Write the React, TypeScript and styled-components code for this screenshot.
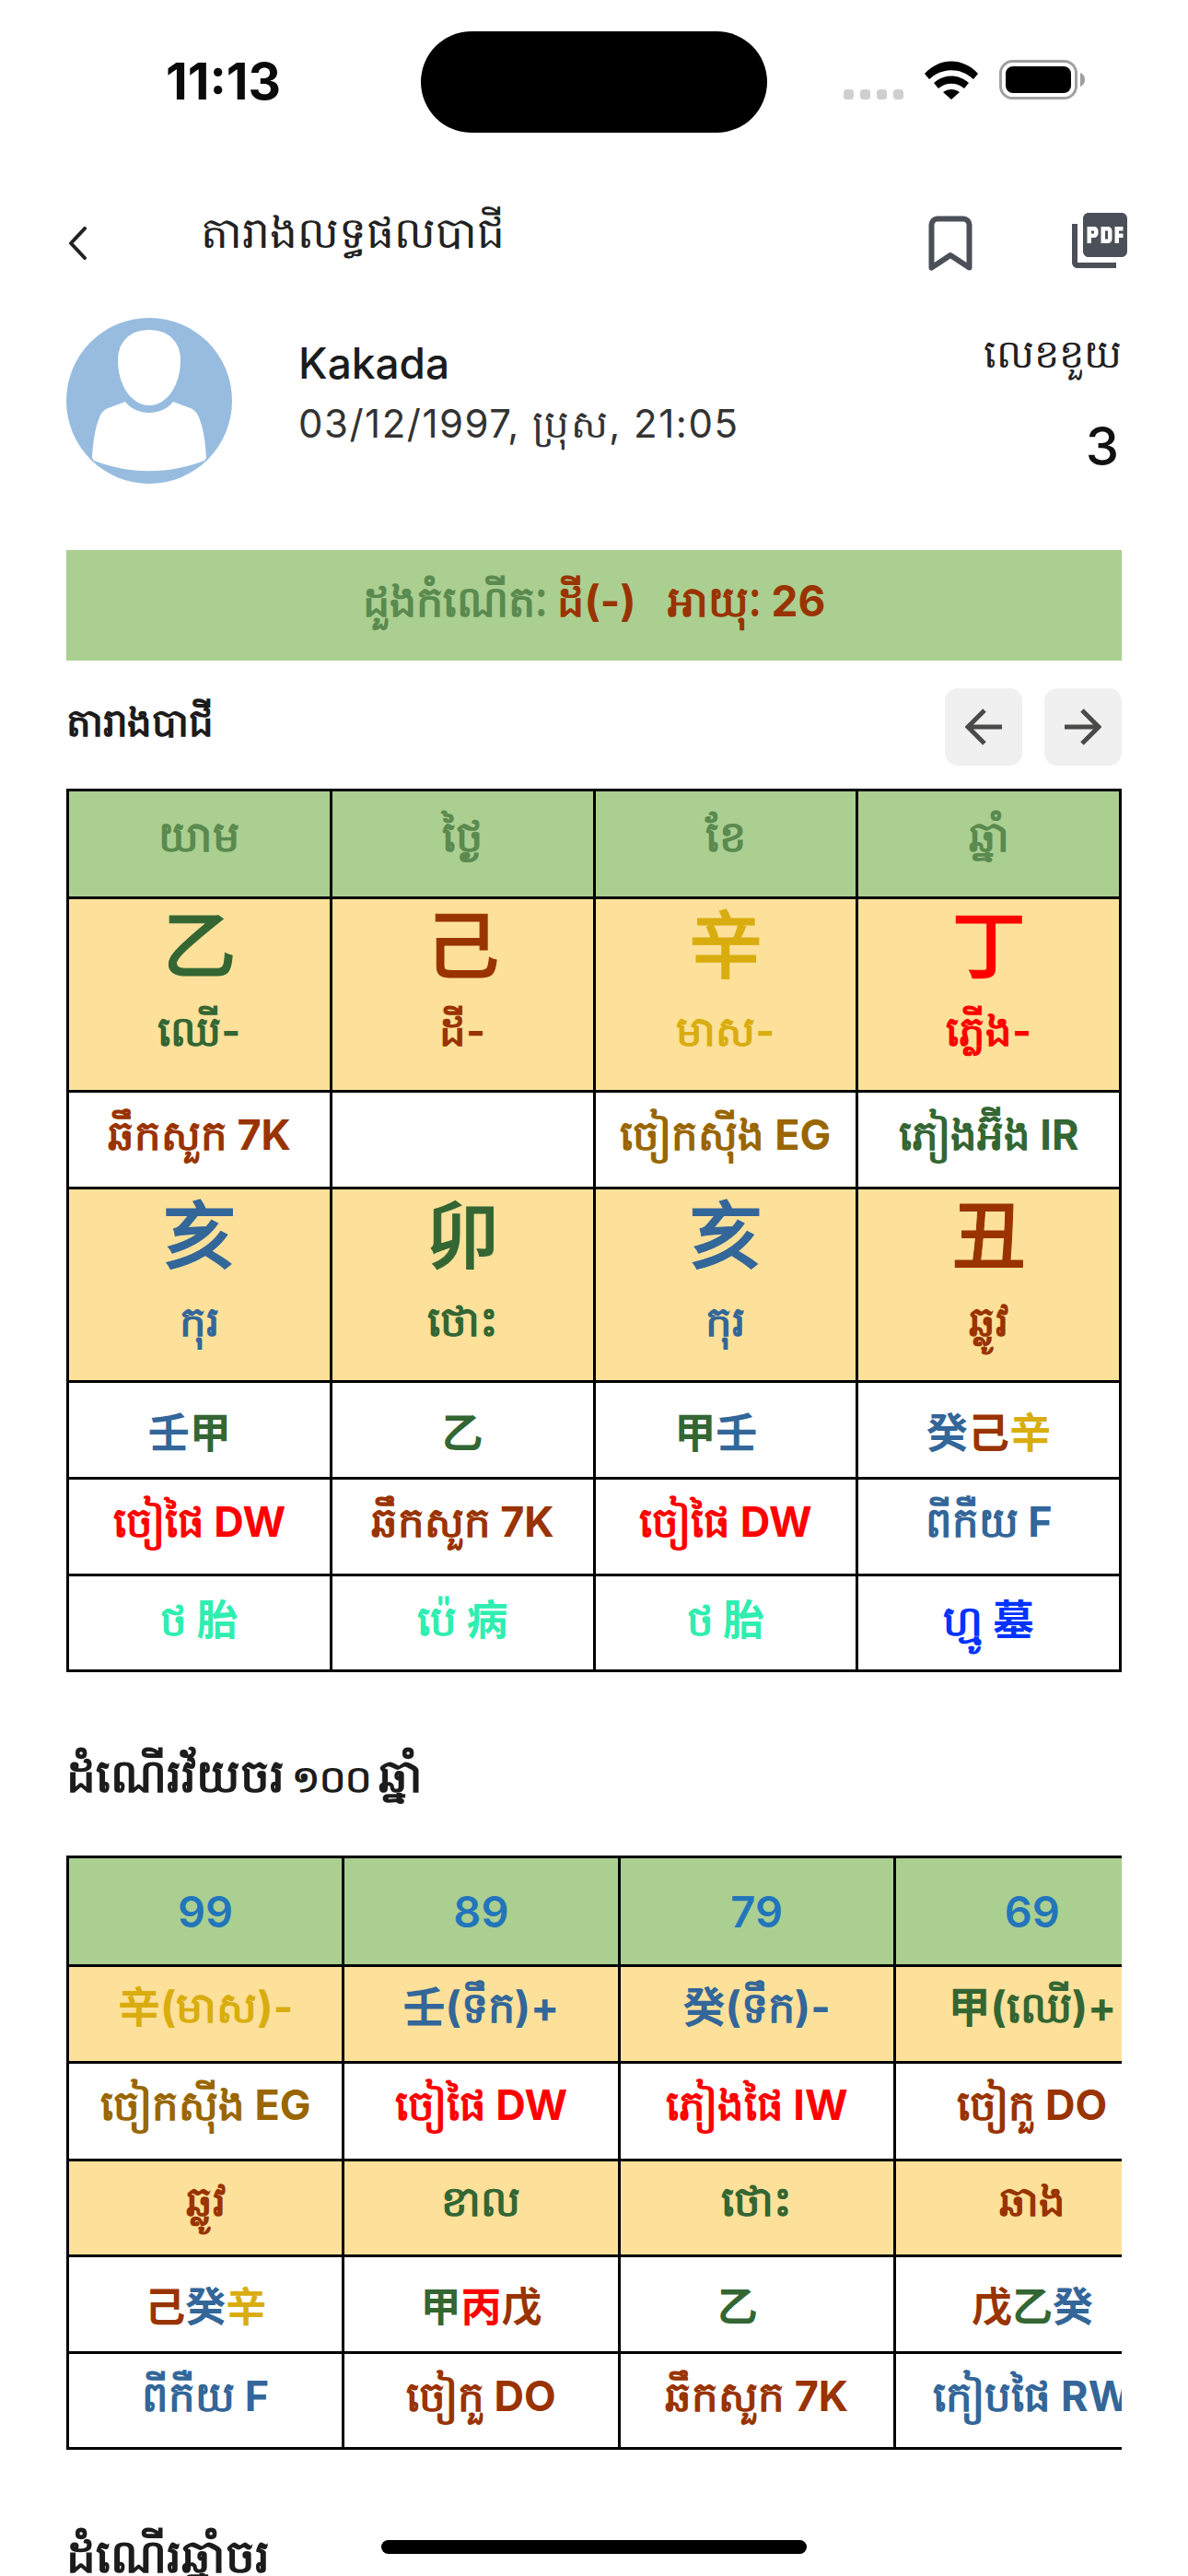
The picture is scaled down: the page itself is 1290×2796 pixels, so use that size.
import React from 'react';
import styled, {createGlobalStyle} from 'styled-components';
import {MdPictureAsPdf} from 'react-icons/md';

const WOOD = '#336633';
const EARTH = '#993300';
const METAL = '#d9ad0f';
const FIRE = '#ff0000';
const WATER = '#336699';
const MINT = '#2eeeb0';
const BLUE = '#0033ff';
const OCHRE = '#996600';
const AGE = '#2275bb';
const GREEN_BG = '#abcf91';
const YELLOW_BG = '#fde19a';

type Piece = {text: string, color: string};
type Cell = Piece[] | null;

const GlobalStyle = createGlobalStyle`
  html, body {
    margin: 0;
    padding: 0;
    background: #fff;
  }
  body {
    font-family: Inter, "Noto Sans", "Noto Sans CJK SC", sans-serif;
    color: #1c1c1c;
  }
`;

const Screen = styled.div`
  position: relative;
  width: 1290px;
  height: 2796px;
  overflow: hidden;
  background: #fff;
`;

const StatusBar = styled.div`
  display: flex;
  align-items: center;
  height: 178px;
  padding: 0 0 0 180px;
  box-sizing: border-box;
`;

const Time = styled.div`
  width: 277px;
  margin-top: -3px;
  font-size: 55px;
  font-weight: 700;
  color: #0a0a0a;
`;

const Notch = styled.div`
  width: 376px;
  height: 110px;
  border-radius: 55px;
  background: #000;
`;

const StatusIcons = styled.div`
  display: flex;
  align-items: flex-end;
  gap: 23px;
  margin: -6px 0 0 83px;
`;

const NavBar = styled.div`
  display: flex;
  align-items: center;
  height: 88px;
  margin-top: 42px;
  padding: 0 60px 0 72px;
`;

const NavTitle = styled.div`
  flex: 1;
  padding: 0 0 24px 122px;
  font-size: 47px;
  line-height: 60px;
  color: #222;
`;

const NavIcons = styled.div`
  display: flex;
  align-items: center;
  gap: 102px;
`;

const PdfButton = styled.div`
  display: flex;
  margin-bottom: 6px;
  color: #4b5058;
`;

const Profile = styled.div`
  display: flex;
  align-items: center;
  height: 180px;
  margin-top: 37px;
  padding: 0 72px;
`;

const ProfileText = styled.div`
  flex: 1;
  padding: 0 0 12px 72px;
`;

const Name = styled.div`
  font-size: 46px;
  font-weight: 500;
  line-height: 62px;
  color: #1c1c1c;
`;

const Birth = styled.div`
  font-size: 42px;
  line-height: 70px;
  letter-spacing: 1.5px;
  color: #333;
`;

const NumberBlock = styled.div`
  display: flex;
  flex-direction: column;
  align-items: flex-end;
  gap: 36px;
`;

const NumberLabel = styled.div`
  font-size: 43px;
  line-height: 62px;
  color: #222;
`;

const NumberValue = styled.div`
  margin-right: 3px;
  font-size: 58px;
  font-weight: 500;
  line-height: 68px;
  color: #111;
`;

const Banner = styled.div`
  display: flex;
  align-items: center;
  justify-content: center;
  gap: 34px;
  height: 120px;
  margin: 72px 72px 0;
  background: ${GREEN_BG};
  font-size: 46px;
  font-weight: 700;
`;

const Tone = styled.span<{$color: string}>`
  color: ${p => p.$color};
`;

const PillarHead = styled.div`
  display: flex;
  align-items: center;
  justify-content: space-between;
  height: 84px;
  margin: 30px 72px 25px;
`;

const SectionTitle = styled.div`
  font-size: 42px;
  font-weight: 700;
  line-height: 60px;
  color: #1c1c1c;
`;

const PillarTitle = styled(SectionTitle)`
  padding-bottom: 10px;
`;

const Pager = styled.div`
  display: flex;
  gap: 24px;
`;

const PagerButton = styled.div`
  display: flex;
  align-items: center;
  justify-content: center;
  width: 84px;
  height: 84px;
  border-radius: 14px;
  background: #f0f0f0;
`;

const TableWrap = styled.div`
  margin: 0 72px;
  overflow: hidden;
`;

const Grid = styled.table<{$width: number}>`
  width: ${p => p.$width}px;
  table-layout: fixed;
  border-collapse: collapse;
  border: 3px solid #000;

  td {
    padding: 0;
    border: 3px solid #000;
    text-align: center;
    vertical-align: middle;
    font-weight: 700;
    white-space: nowrap;
    overflow: hidden;
  }
`;

const Row = styled.tr<{$height: number, $bg?: string, $size: number, $lift?: number, $weight?: number}>`
  height: ${p => p.$height}px;
  background: ${p => p.$bg || '#fff'};
  font-size: ${p => p.$size}px;

  td {
    padding-bottom: ${p => p.$lift || 0}px;
    font-weight: ${p => p.$weight || 700};
  }
`;

const StemCell = styled.td`
  && {
    vertical-align: top;
  }
`;

const Stem = styled.div<{$color: string}>`
  color: ${p => p.$color};
  font-size: 80px;
  line-height: 100px;
  font-weight: 500;
  -webkit-text-stroke: 1px ${p => p.$color};
`;

const StemName = styled.div<{$color: string}>`
  margin-top: 5px;
  color: ${p => p.$color};
  font-size: 45px;
  line-height: 76px;
`;

const YearHeading = styled(SectionTitle)`
  margin: 82px 72px 53px;
  font-size: 50px;
  word-spacing: -4px;
`;

const Numerals = styled.span`
  font-size: 40px;
`;

const BottomHeading = styled(YearHeading)`
  margin-top: 85px;
`;

const HomeIndicator = styled.div`
  position: absolute;
  left: 414px;
  bottom: 24px;
  width: 462px;
  height: 15px;
  border-radius: 8px;
  background: #000;
`;

const Signal = () => (
  <svg width="65" height="11" viewBox="0 0 65 11">
    {[0, 18, 36, 54].map(x => <rect key={x} x={x} y="0" width="11" height="11" rx="3.5" fill="#cfcfcf" />)}
  </svg>
);

const Wifi = () => (
  <svg width="58" height="42" viewBox="0 0 58 42">
    <path d="M0 14C16-4 42-4 58 14l-5 6C39 7 19 7 5 20z" fill="#000" />
    <path d="M10 24c11-10 27-10 38 0l-5 6c-8-7-20-7-28 0z" fill="#000" />
    <path d="M20 34c6-4 12-4 18 0l-9 8z" fill="#000" />
  </svg>
);

const Battery = () => (
  <svg width="93" height="43" viewBox="0 0 93 43">
    <rect x="1.5" y="1.5" width="82" height="40" rx="13" fill="none" stroke="#a0a0a0" strokeWidth="3" />
    <rect x="7" y="7" width="71" height="29" rx="8" fill="#000" />
    <path d="M88 14c3 1 5 4 5 7.5s-2 6.500-5 7.500z" fill="#a0a0a0" />
  </svg>
);

const Back = () => (
  <svg width="24" height="36" viewBox="0 0 24 36">
    <path d="M20 2L5 18l15 16" fill="none" stroke="#222" strokeWidth="4" strokeLinecap="round" strokeLinejoin="round" />
  </svg>
);

const BookmarkIcon = () => (
  <svg width="48" height="60" viewBox="0 0 48 60">
    <path d="M3.500 56.500V10c0-3.500 3-6.500 6.500-6.500h28c3.500 0 6.500 3 6.500 6.500v46.500L24 43z" fill="none" stroke="#4b5058" strokeWidth="6" strokeLinejoin="round" />
  </svg>
);

const Avatar = () => (
  <svg width="180" height="180" viewBox="0 0 180 180">
    <circle cx="90" cy="90" r="90" fill="#97bcdf" />
    <path d="M90 13C112 13 124 27 124 46C124 72 110 95 90 95C70 95 56 72 56 46C56 27 68 13 90 13Z" fill="#fff" />
    <path d="M64 91C70 99 80 103 90 103C100 103 110 99 116 91L132 97C138 99 141 101 144 108C149 120 151 135 152 152L150 155C110 170 70 170 30 155L28 152C29 135 31 120 36 108C39 101 42 99 48 97Z" fill="#fff" />
  </svg>
);

const ArrowIcon = ({flip}: {flip?: boolean}) => (
  <svg width="40" height="40" viewBox="0 0 40 40" style={flip ? {transform: 'scaleX(-1)'} : undefined}>
    <path d="M21 2L3 20l18 18M3 20h37" fill="none" stroke="#4a4a48" strokeWidth="5" />
  </svg>
);

const t = (text: string, color: string): Piece => ({text, color});

const renderPieces = (cell: Cell) => cell && cell.map((p, i) => <Tone key={i} $color={p.color}>{p.text}</Tone>);

const headers = ['យាម', 'ថ្ងៃ', 'ខែ', 'ឆ្នាំ'];

const topStems = [
  {stem: '乙', name: 'ឈើ-', color: WOOD},
  {stem: '己', name: 'ដី-', color: EARTH},
  {stem: '辛', name: 'មាស-', color: METAL},
  {stem: '丁', name: 'ភ្លើង-', color: FIRE},
];

const gods: Cell[] = [
  [t('ឆឹកសួក 7K', EARTH)],
  null,
  [t('ចៀកស៊ីង EG', OCHRE)],
  [t('ភៀងអ៊ីង IR', WOOD)],
];

const branches = [
  {stem: '亥', name: 'កុរ', color: WATER},
  {stem: '卯', name: 'ថោះ', color: WOOD},
  {stem: '亥', name: 'កុរ', color: WATER},
  {stem: '丑', name: 'ឆ្លូវ', color: EARTH},
];

const hidden: Cell[] = [
  [t('壬', WATER), t('甲', WOOD), t('\u00a0\u00a0', WOOD)],
  [t('乙', WOOD)],
  [t('甲', WOOD), t('壬', WATER), t('\u00a0\u00a0', WOOD)],
  [t('癸', WATER), t('己', EARTH), t('辛', METAL)],
];

const hiddenGods: Cell[] = [
  [t('ចៀផៃ DW', FIRE)],
  [t('ឆឹកសួក 7K', EARTH)],
  [t('ចៀផៃ DW', FIRE)],
  [t('ពីកឺយ F', WATER)],
];

const stages: Cell[] = [
  [t('ថ 胎', MINT)],
  [t('ប៉េ 病', MINT)],
  [t('ថ 胎', MINT)],
  [t('ហ្មូ 墓', BLUE)],
];

const decades: Cell[][] = [
  [[t('99', AGE)], [t('89', AGE)], [t('79', AGE)], [t('69', AGE)]],
  [[t('辛(មាស)-', METAL)], [t('壬(ទឹក)+', WATER)], [t('癸(ទឹក)-', WATER)], [t('甲(ឈើ)+', WOOD)]],
  [[t('ចៀកស៊ីង EG', OCHRE)], [t('ចៀផៃ DW', FIRE)], [t('ភៀងផៃ IW', FIRE)], [t('ចៀកួ DO', EARTH)]],
  [[t('ឆ្លូវ', EARTH)], [t('ខាល', WOOD)], [t('ថោះ', WOOD)], [t('ឆាង', EARTH)]],
  [
    [t('己', EARTH), t('癸', WATER), t('辛', METAL)],
    [t('甲', WOOD), t('丙', FIRE), t('戊', EARTH)],
    [t('乙', WOOD), t('\u00a0\u00a0\u00a0\u00a0', WOOD)],
    [t('戊', EARTH), t('乙', WOOD), t('癸', WATER)],
  ],
  [[t('ពីកឺយ F', WATER)], [t('ចៀកួ DO', EARTH)], [t('ឆឹកសួក 7K', EARTH)], [t('កៀបផៃ RW', WATER)]],
];

const decadeRows = [
  {height: 118, bg: GREEN_BG, size: 47, weight: 600},
  {height: 105, bg: YELLOW_BG, size: 46, lift: 14},
  {height: 106, size: 45, lift: 3},
  {height: 104, bg: YELLOW_BG, size: 45, lift: 6},
  {height: 105, size: 44},
  {height: 104, size: 45},
];

export default function App() {
  return <Screen>
    <GlobalStyle />
    <StatusBar>
      <Time>11:13</Time>
      <Notch />
      <StatusIcons>
        <Signal />
        <Wifi />
        <Battery />
      </StatusIcons>
    </StatusBar>
    <NavBar>
      <Back />
      <NavTitle>តារាងលទ្ធផលបាជី</NavTitle>
      <NavIcons>
        <BookmarkIcon />
        <PdfButton><MdPictureAsPdf size={72} /></PdfButton>
      </NavIcons>
    </NavBar>
    <Profile>
      <Avatar />
      <ProfileText>
        <Name>Kakada</Name>
        <Birth>03/12/1997, ប្រុស, 21:05</Birth>
      </ProfileText>
      <NumberBlock>
        <NumberLabel>លេខខួយ</NumberLabel>
        <NumberValue>3</NumberValue>
      </NumberBlock>
    </Profile>
    <Banner>
      <span><Tone $color="#5a8a4f">ដួងកំណើតៈ </Tone><Tone $color={EARTH}>ដី(-)</Tone></span>
      <span><Tone $color={EARTH}>អាយុៈ 26</Tone></span>
    </Banner>
    <PillarHead>
      <PillarTitle>តារាងបាជី</PillarTitle>
      <Pager>
        <PagerButton><ArrowIcon /></PagerButton>
        <PagerButton><ArrowIcon flip /></PagerButton>
      </Pager>
    </PillarHead>
    <TableWrap>
      <Grid $width={1146}>
        <tbody>
          <Row $height={117} $bg={GREEN_BG} $size={46} $lift={8}>
            {headers.map(h => <td key={h}><Tone $color="#5a8a4f">{h}</Tone></td>)}
          </Row>
          <Row $height={210} $bg={YELLOW_BG} $size={45}>
            {topStems.map(s => <StemCell key={s.stem}>
              <Stem $color={s.color}>{s.stem}</Stem>
              <StemName $color={s.color}>{s.name}</StemName>
            </StemCell>)}
          </Row>
          <Row $height={105} $size={45}>
            {gods.map((c, i) => <td key={i}>{renderPieces(c)}</td>)}
          </Row>
          <Row $height={210} $bg={YELLOW_BG} $size={45}>
            {branches.map((s, i) => <StemCell key={i}>
              <Stem $color={s.color}>{s.stem}</Stem>
              <StemName $color={s.color}>{s.name}</StemName>
            </StemCell>)}
          </Row>
          <Row $height={105} $size={45}>
            {hidden.map((c, i) => <td key={i}>{renderPieces(c)}</td>)}
          </Row>
          <Row $height={105} $size={45}>
            {hiddenGods.map((c, i) => <td key={i}>{renderPieces(c)}</td>)}
          </Row>
          <Row $height={104} $size={45} $lift={4}>
            {stages.map((c, i) => <td key={i}>{renderPieces(c)}</td>)}
          </Row>
        </tbody>
      </Grid>
    </TableWrap>
    <YearHeading>ដំណើរវ័យចរ <Numerals>១០០</Numerals> ឆ្នាំ</YearHeading>
    <TableWrap>
      <Grid $width={1200}>
        <tbody>
          {decades.map((row, r) => <Row
            key={r}
            $height={decadeRows[r].height}
            $bg={decadeRows[r].bg}
            $size={decadeRows[r].size}
            $lift={decadeRows[r].lift}
            $weight={decadeRows[r].weight}
          >
            {row.map((c, i) => <td key={i}>{renderPieces(c)}</td>)}
          </Row>)}
        </tbody>
      </Grid>
    </TableWrap>
    <BottomHeading>ដំណើរឆ្នាំចរ</BottomHeading>
    <HomeIndicator />
  </Screen>;
}
